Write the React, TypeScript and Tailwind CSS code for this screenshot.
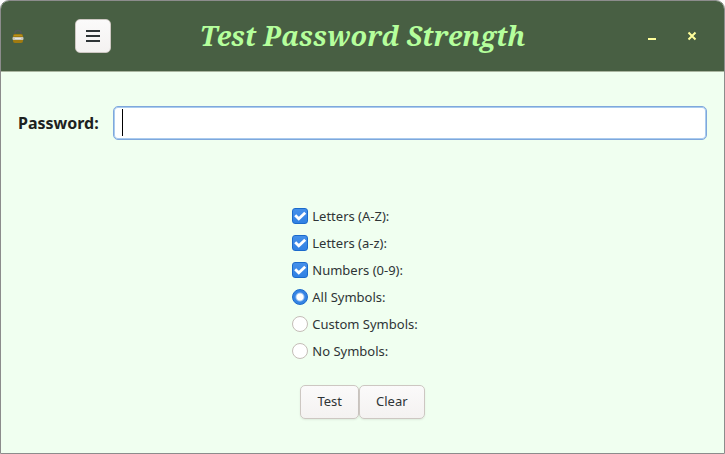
import { useState } from "react";

const charsets = ["Letters (A-Z):", "Letters (a-z):", "Numbers (0-9):"];
const symbolModes = ["All Symbols:", "Custom Symbols:", "No Symbols:"];

const buttonClass =
  "h-[34px] rounded-[5px] border border-[#cdc7c2] bg-linear-to-b from-[#fbfafa] to-[#f4f2f1] px-4 pb-[2px] text-[#2e3436] shadow-[0_1px_2px_rgba(0,0,0,0.08)]";

function LockIcon() {
  return (
    <svg width="12" height="14" viewBox="0 0 12 14" aria-hidden="true">
      <path d="M3 6V4C3 .8 9 .8 9 4V6" fill="none" stroke="#535859" strokeWidth="1.5" />
      <rect x="1" y="5" width="10" height="9" rx="2" fill="#a07a10" />
      <rect x="2" y="6" width="8" height="1" fill="#b8921a" />
      <rect x="0.5" y="8" width="11" height="3" rx="1" fill="#c9c6ba" />
      <rect x="3" y="9" width="6" height="1" fill="#e6e4dd" />
    </svg>
  );
}

function TitleBar() {
  return (
    <header className="grid h-[71px] grid-cols-[1fr_auto_1fr] items-center rounded-t-[8px] border-b border-[#a9b5a0] bg-[#485f43] px-[11px]">
      <div className="flex items-center gap-[51px]">
        <LockIcon />
        <button
          type="button"
          aria-label="Menu"
          className="flex h-[34px] w-9 items-center justify-center rounded-[5px] border border-[#cdc7c2] bg-linear-to-b from-[#fbfafa] to-[#f4f2f1]"
        >
          <svg width="14" height="12" viewBox="0 0 14 12" fill="#2e3436" aria-hidden="true">
            <path d="M0 0h14v2H0zM0 5h14v2H0zM0 10h14v2H0z" />
          </svg>
        </button>
      </div>
      <h1 className="font-['Noto_Serif','Liberation_Serif',serif] text-[27px] leading-9 font-bold text-[#b5ff9c] italic">
        Test Password Strength
      </h1>
      <div className="flex items-center justify-end gap-6 pr-[13px] text-[#ffff9c]">
        <button type="button" aria-label="Minimize" className="flex size-4 items-center justify-center">
          <svg width="16" height="16" viewBox="0 0 16 16" fill="currentColor" aria-hidden="true">
            <path d="M4 10h8v2H4z" />
          </svg>
        </button>
        <button type="button" aria-label="Close" className="flex size-4 items-center justify-center">
          <svg width="16" height="16" viewBox="0 0 16 16" stroke="currentColor" strokeWidth="2" aria-hidden="true">
            <path d="M4.5 4.5l7 7M11.5 4.5l-7 7" />
          </svg>
        </button>
      </div>
    </header>
  );
}

export default function App() {
  const [password, setPassword] = useState("");
  const [checked, setChecked] = useState([true, true, true]);
  const [mode, setMode] = useState(0);

  const toggle = (index: number) =>
    setChecked(checked.map((value, i) => (i === index ? !value : value)));

  return (
    <div className="flex min-h-screen flex-col rounded-t-[9px] border border-[#8c8c8c] bg-[#f0fff0] font-['Noto_Sans',sans-serif] text-[13px] leading-[18px] text-[#2e3436]">
      <TitleBar />
      <main className="flex flex-col items-center pb-[34px]">
        <div className="flex w-full items-center gap-3.5 px-[17px] pt-[34px]">
          <label htmlFor="password" className="text-base font-bold text-[#1d2221]">
            Password:
          </label>
          <div className="relative flex-1">
            <input
              id="password"
              type="text"
              value={password}
              onChange={(e) => setPassword(e.target.value)}
              className="peer block h-[34px] w-full rounded-[5px] border border-[#7fa7dc] bg-white px-2 shadow-[inset_0_0_0_1px_#a9cbee] outline-none"
            />
            {/* idle text cursor, hidden once the field has real focus */}
            <span className="pointer-events-none absolute top-[3px] left-[9px] h-[27px] w-px bg-black peer-focus:hidden" />
          </div>
        </div>

        <div className="mt-[67px] flex flex-col gap-[9px] pr-[15px]">
          {charsets.map((label, i) => (
            <label key={label} className="flex items-center gap-1">
              <span className="grid size-4 shrink-0 *:col-start-1 *:row-start-1">
                <input
                  type="checkbox"
                  checked={checked[i]}
                  onChange={() => toggle(i)}
                  className="peer size-4 appearance-none rounded-[3px] border border-[#cdc7c2] bg-white checked:border-[#1b6acb] checked:bg-linear-to-b checked:from-[#4590ea] checked:to-[#3081e3]"
                />
                <svg
                  viewBox="0 0 16 16"
                  className="pointer-events-none invisible size-4 peer-checked:visible"
                  fill="none"
                  stroke="white"
                  strokeWidth="2.8"
                  aria-hidden="true"
                >
                  <path d="M3.2 7.2l3.6 3.6 6.4-6" />
                </svg>
              </span>
              {label}
            </label>
          ))}
          {symbolModes.map((label, i) => (
            <label key={label} className="flex items-center gap-1">
              <input
                type="radio"
                name="symbols"
                checked={mode === i}
                onChange={() => setMode(i)}
                className="size-4 shrink-0 appearance-none rounded-full border border-[#c4bdb7] bg-white checked:border-[#1b6acb] checked:bg-[radial-gradient(circle,white_3px,#3584e4_5px)]"
              />
              {label}
            </label>
          ))}
        </div>

        <div className="mt-[25px] flex">
          <button type="button" className={buttonClass}>
            Test
          </button>
          <button type="button" className={buttonClass} onClick={() => setPassword("")}>
            Clear
          </button>
        </div>
      </main>
    </div>
  );
}
